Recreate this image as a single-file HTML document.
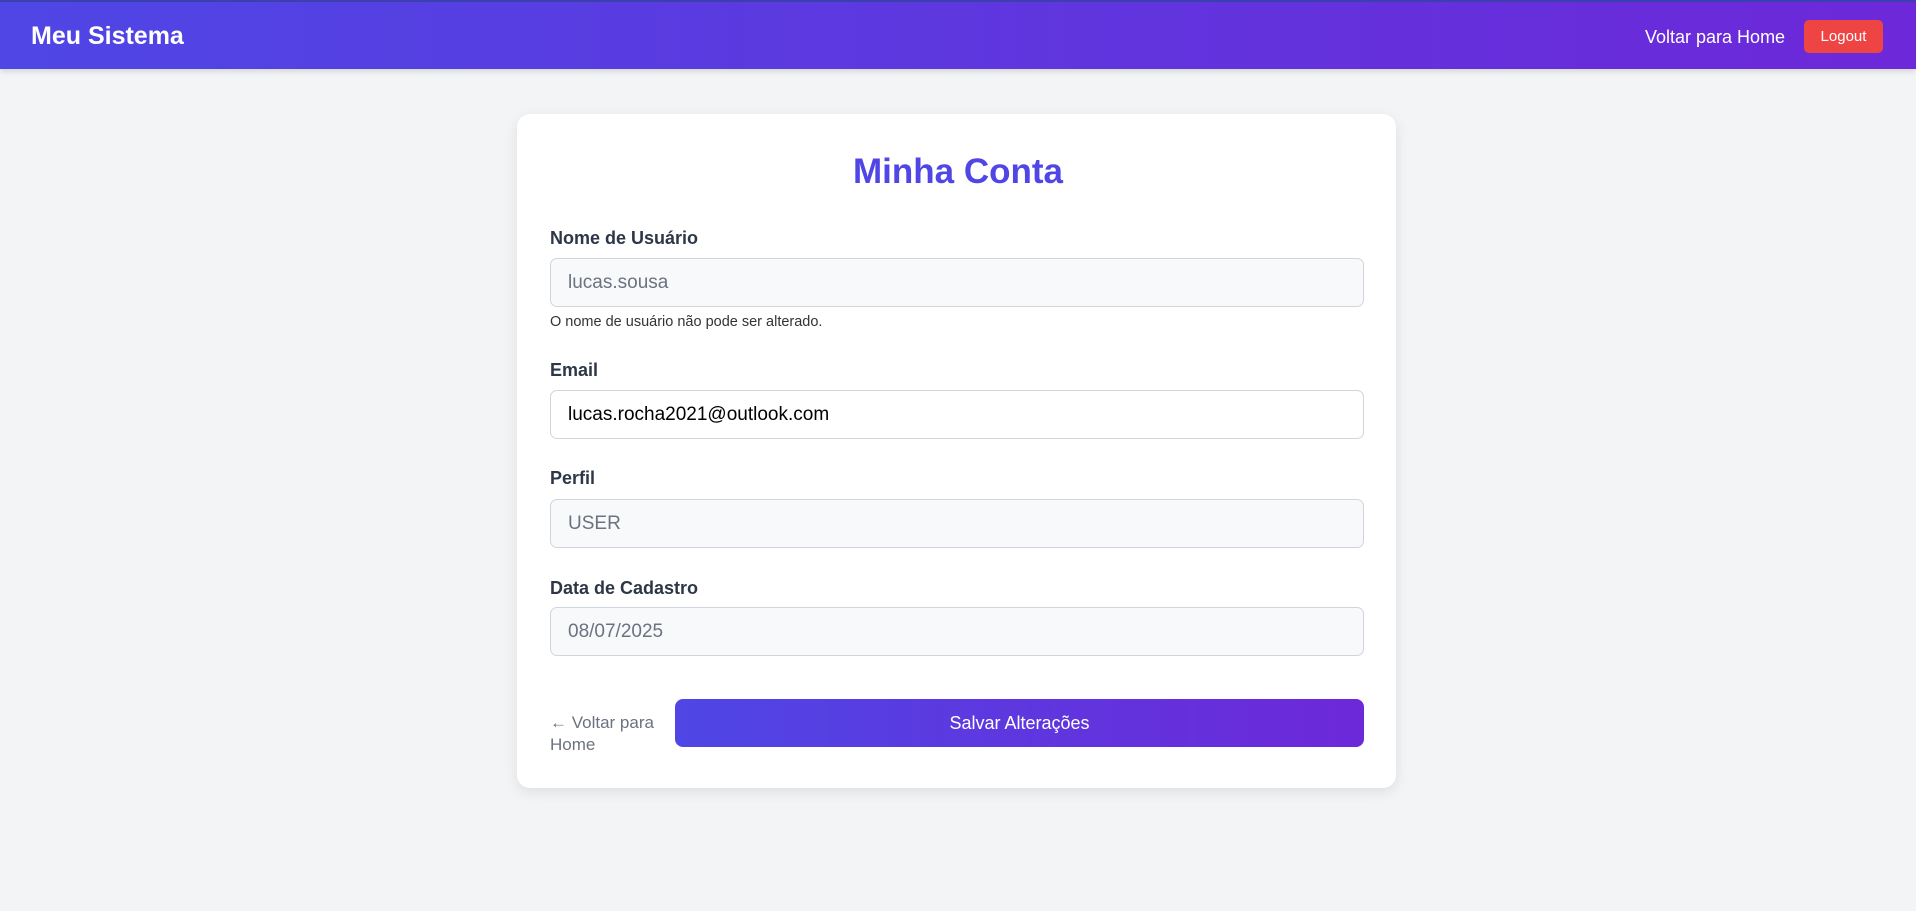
<!DOCTYPE html>
<html><head><meta charset="utf-8"><style>
*{box-sizing:border-box;margin:0;padding:0}
body{width:1916px;height:911px;background:#f3f4f6;font-family:"Liberation Sans",sans-serif;position:relative;overflow:hidden}
.nav{position:absolute;left:0;top:0;width:1916px;height:69px;background:linear-gradient(90deg,#4f46e5,#6d28d9);box-shadow:0 2px 6px rgba(0,0,0,.15);border-top:2px solid #3b3fb0}
.brand{position:absolute;left:31px;top:20px;color:#fff;font-weight:bold;font-size:25px}
.home{position:absolute;left:1645px;top:25px;color:#fff;font-size:18px}
.logout{position:absolute;left:1804px;top:18px;width:79px;height:33px;background:#ef4444;border-radius:5px;color:#fff;font-size:15px;text-align:center;line-height:33px}
.card{position:absolute;left:517px;top:114px;width:879px;height:674px;background:#fff;border-radius:13px;box-shadow:0 4px 14px rgba(0,0,0,.09)}
h1{position:absolute;left:0;width:100%;top:152px;text-align:center;color:#4f46e5;font-size:35px;font-weight:bold}
.lbl{position:absolute;left:550px;color:#2d3748;font-size:18px;font-weight:bold}
.inp{position:absolute;left:550px;width:814px;height:49px;border:1px solid #d1d5db;border-radius:7px;background:#f8f9fb;color:#6b7280;font-size:19px;padding-left:17px;line-height:47px}
.inp.w{background:#fff;color:#000}
.hint{position:absolute;left:550px;top:314px;font-size:14.5px;color:#333}
.back{position:absolute;left:550px;top:712px;font-size:17px;color:#6b7280;line-height:22px;width:110px}
.btn{position:absolute;left:675px;top:699px;width:689px;height:48px;border-radius:8px;background:linear-gradient(90deg,#4f46e5,#6d28d9);color:#fff;font-size:18px;text-align:center;line-height:48px}
</style></head><body>
<div class="nav"><div class="brand">Meu Sistema</div><div class="home">Voltar para Home</div><div class="logout">Logout</div></div>
<div class="card"></div>
<h1>Minha Conta</h1>
<div class="lbl" style="top:228px">Nome de Usuário</div>
<div class="inp" style="top:258px">lucas.sousa</div>
<div class="hint">O nome de usuário não pode ser alterado.</div>
<div class="lbl" style="top:360px">Email</div>
<div class="inp w" style="top:390px">lucas.rocha2021@outlook.com</div>
<div class="lbl" style="top:468px">Perfil</div>
<div class="inp" style="top:499px">USER</div>
<div class="lbl" style="top:578px">Data de Cadastro</div>
<div class="inp" style="top:607px">08/07/2025</div>
<div class="back">← Voltar para Home</div>
<div class="btn">Salvar Alterações</div>
</body></html>
